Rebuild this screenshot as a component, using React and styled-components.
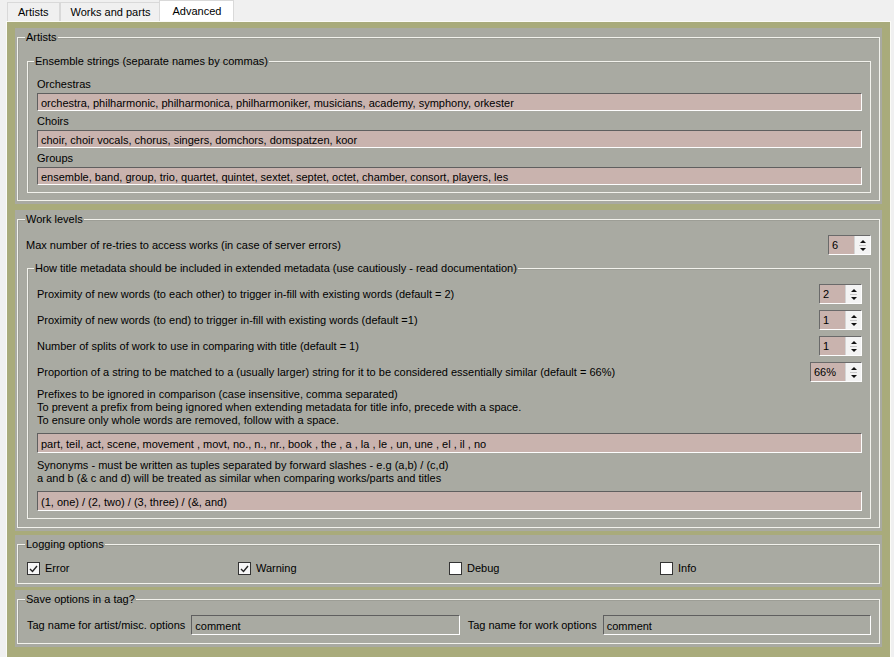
import React from "react";
import styled, { createGlobalStyle } from "styled-components";

const GlobalStyle = createGlobalStyle`
  html, body {
    margin: 0;
    padding: 0;
    background: #f0f0f0;
  }
  body {
    font-family: "Liberation Sans", Arial, sans-serif;
    font-size: 11px;
    color: #000;
  }
`;

const Window = styled.div`
  width: 894px;
  height: 657px;
  overflow: hidden;
  display: flex;
  flex-direction: column;
  background: #f0f0f0;
`;

const TabBar = styled.div`
  display: flex;
  align-items: flex-end;
  height: 21px;
  padding-left: 7px;
  flex-shrink: 0;
`;

const Tab = styled.div`
  height: ${(p) => (p.$active ? "21px" : "19px")};
  line-height: ${(p) => (p.$active ? "21px" : "19px")};
  padding: 0 ${(p) => (p.$active ? "12px" : "10px")};
  margin: 0 ${(p) => (p.$active ? "-2px" : "0")};
  box-sizing: border-box;
  background: ${(p) => (p.$active ? "#fff" : "#f0f0f0")};
  border: 1px solid #d9d9d9;
  border-bottom: none;
  position: relative;
  z-index: ${(p) => (p.$active ? 1 : 0)};
  white-space: nowrap;
`;

const Pane = styled.div`
  flex: 1;
  margin-left: 6px;
  width: 885px;
  box-sizing: border-box;
  background: #a9ab7b;
  border: 1px solid #fbfbf6;
  border-bottom: none;
  padding: 6px 8px 0 8px;
  display: flex;
  flex-direction: column;
`;

const Group = styled.div`
  background: #a9aaa2;
  padding: 2px 2px 3px 2px;
  margin-top: ${(p) => p.$mt || 0}px;
`;

const Frame = styled.fieldset`
  margin: 0 0 0 ${(p) => (p.$inner ? "1px" : "0")};
  padding: 0 8px ${(p) => p.$pb || 7}px ${(p) => (p.$inner ? "9px" : "8px")};
  border: 1px solid #f2f2ec;
  box-shadow: inset 1px 1px 0 #9d9e96;
  min-width: 0;
`;

const Title = styled.legend`
  padding: 0 1px;
  margin-left: ${(p) => (p.$inner ? "-3px" : "-1px")};
  line-height: 14px;
  font-size: 11px;
`;

const Stack = styled.div`
  display: flex;
  flex-direction: column;
  padding-top: ${(p) => p.$pt || 0}px;
  gap: ${(p) => p.$gap || 0}px;
`;

const FieldLabel = styled.div`
  line-height: 13px;
  margin-bottom: 2px;
`;

const TextField = styled.div`
  height: ${(p) => (p.$tall ? "20px" : "18px")};
  line-height: ${(p) => (p.$tall ? "20px" : "18px")};
  box-sizing: border-box;
  background: ${(p) => (p.$plain ? "#a9aaa2" : "#c9b3ae")};
  border: 1px solid;
  border-color: #5f5f5f #fdfdfd #fdfdfd #5f5f5f;
  padding: 0 3px;
  margin-bottom: ${(p) => p.$mb || 0}px;
  white-space: nowrap;
  overflow: hidden;
  flex: ${(p) => (p.$grow ? 1 : "none")};
`;

const Row = styled.div`
  display: flex;
  align-items: center;
  justify-content: space-between;
  height: 20px;
`;

const Spin = styled.div`
  display: flex;
  height: 20px;
  box-sizing: border-box;
  border: 1px solid;
  border-color: #6a6a6a #fdfdfd #fdfdfd #6a6a6a;
  background: #c9b3ae;
`;

const SpinValue = styled.div`
  width: ${(p) => p.$w}px;
  line-height: 18px;
  padding-left: 3px;
  box-sizing: border-box;
`;

const SpinButtons = styled.div`
  width: 15px;
  background: #f3f3f3;
  border-left: 1px solid #d4d4d4;
  display: flex;
  flex-direction: column;
  align-items: center;
  justify-content: center;
  gap: 2px;
`;

const Arrow = styled.span`
  width: 0;
  height: 0;
  border-left: 3px solid transparent;
  border-right: 3px solid transparent;
  ${(p) => (p.$down ? "border-top: 3px solid #111;" : "border-bottom: 3px solid #111;")}
`;

const Divider = styled.span`
  width: 7px;
  height: 1px;
  background: #c8c8c8;
`;

const Note = styled.div`
  line-height: 13px;
  white-space: pre-line;
`;

const CheckGrid = styled.div`
  display: grid;
  grid-template-columns: repeat(4, 1fr);
  padding-left: 1px;
  height: 13px;
`;

const CheckItem = styled.label`
  display: flex;
  align-items: center;
  gap: 5px;
  line-height: 13px;
`;

const Box = styled.span`
  width: 13px;
  height: 13px;
  box-sizing: border-box;
  border: 1px solid #333;
  background: ${(p) => (p.$checked ? "#f6f6f6" : "#fff")};
  display: flex;
  align-items: center;
  justify-content: center;
`;

const TagRow = styled.div`
  display: flex;
  align-items: center;
  gap: 6px;
  padding-left: 1px;
`;

const TagLabel = styled.span`
  white-space: nowrap;
  margin-left: ${(p) => p.$ml || 0}px;
`;

function SpinBox({ value, width }) {
  return (
    <Spin>
      <SpinValue $w={width}>{value}</SpinValue>
      <SpinButtons>
        <Arrow />
        <Divider />
        <Arrow $down />
      </SpinButtons>
    </Spin>
  );
}

function Check({ label, checked }) {
  return (
    <CheckItem>
      <Box $checked={checked}>
        {checked && (
          <svg width="9" height="8" viewBox="0 0 9 8">
            <path d="M1 4 L3.5 6.5 L8 1" fill="none" stroke="#222" strokeWidth="1.4" />
          </svg>
        )}
      </Box>
      {label}
    </CheckItem>
  );
}

const ensembles = [
  ["Orchestras", "orchestra, philharmonic, philharmonica, philharmoniker, musicians, academy, symphony, orkester"],
  ["Choirs", "choir, choir vocals, chorus, singers, domchors, domspatzen, koor"],
  ["Groups", "ensemble, band, group, trio, quartet, quintet, sextet, septet, octet, chamber, consort, players, les"],
];

const titleRows = [
  ["Proximity of new words (to each other) to trigger in-fill with existing words (default = 2)", "2", 25],
  ["Proximity of new words (to end) to trigger in-fill with existing words (default =1)", "1", 25],
  ["Number of splits of work to use in comparing with title (default = 1)", "1", 25],
  ["Proportion of a string to be matched to a (usually larger) string for it to be considered essentially similar (default = 66%)", "66%", 34],
];

export default function App() {
  return (
    <Window>
      <GlobalStyle />
      <TabBar>
        <Tab>Artists</Tab>
        <Tab>Works and parts</Tab>
        <Tab $active>Advanced</Tab>
      </TabBar>
      <Pane>
        <Group>
          <Frame>
            <Title>Artists</Title>
            <Stack $pt={10}>
              <Frame $inner>
                <Title $inner>Ensemble strings (separate names by commas)</Title>
                <Stack $pt={10}>
                  {ensembles.map(([label, value], i) => (
                    <React.Fragment key={label}>
                      <FieldLabel>{label}</FieldLabel>
                      <TextField $mb={i < 2 ? 4 : 0}>{value}</TextField>
                    </React.Fragment>
                  ))}
                </Stack>
              </Frame>
            </Stack>
          </Frame>
        </Group>

        <Group $mt={6}>
          <Frame $pb={8}>
            <Title>Work levels</Title>
            <Stack $pt={9} $gap={6}>
              <Row>
                <span>Max number of re-tries to access works (in case of server errors)</span>
                <SpinBox value="6" width={25} />
              </Row>
              <Frame $inner>
                <Title $inner>
                  How title metadata should be included in extended metadata (use cautiously - read documentation)
                </Title>
                <Stack $pt={9} $gap={6}>
                  {titleRows.map(([text, value, w]) => (
                    <Row key={text}>
                      <span>{text}</span>
                      <SpinBox value={value} width={w} />
                    </Row>
                  ))}
                  <Note>
                    {"Prefixes to be ignored in comparison (case insensitive, comma separated)\nTo prevent a prefix from being ignored when extending metadata for title info, precede with a space.\nTo ensure only whole words are removed, follow with a space."}
                  </Note>
                  <TextField $tall>
                    part, teil, act, scene, movement , movt, no., n., nr., book , the , a , la , le , un, une , el , il , no
                  </TextField>
                  <Note>
                    {"Synonyms - must be written as tuples separated by forward slashes - e.g (a,b) / (c,d)\na and b (& c and d) will be treated as similar when comparing works/parts and titles"}
                  </Note>
                  <TextField $tall>(1, one) / (2, two) / (3, three) / (&, and)</TextField>
                </Stack>
              </Frame>
            </Stack>
          </Frame>
        </Group>

        <Group $mt={4}>
          <Frame $pb={8}>
            <Title>Logging options</Title>
            <Stack $pt={11}>
              <CheckGrid>
                <Check label="Error" checked />
                <Check label="Warning" checked />
                <Check label="Debug" />
                <Check label="Info" />
              </CheckGrid>
            </Stack>
          </Frame>
        </Group>

        <Group $mt={3}>
          <Frame $pb={8}>
            <Title>Save options in a tag?</Title>
            <Stack $pt={9}>
              <TagRow>
                <TagLabel>Tag name for artist/misc. options</TagLabel>
                <TextField $tall $plain $grow>comment</TextField>
                <TagLabel $ml={2}>Tag name for work options</TagLabel>
                <TextField $tall $plain $grow>comment</TextField>
              </TagRow>
            </Stack>
          </Frame>
        </Group>
      </Pane>
    </Window>
  );
}
